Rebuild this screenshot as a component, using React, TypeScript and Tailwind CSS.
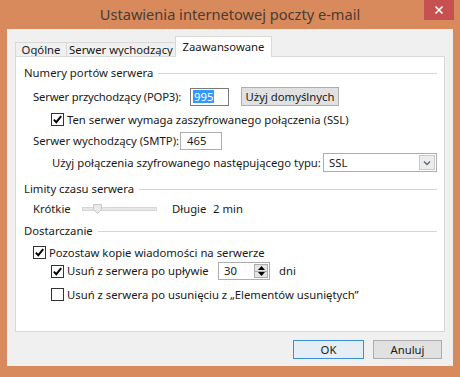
import React from "react";

function Check({ checked }: { checked?: boolean }) {
  return (
    <span className="flex h-[13px] w-[13px] shrink-0 items-center justify-center border border-[#333] bg-white">
      {checked && (
        <svg width="11" height="11" viewBox="0 0 11 11">
          <path d="M1.8 5.6 L4.3 8.2 L9.2 2.2" fill="none" stroke="#000" strokeWidth="1.9" />
        </svg>
      )}
    </span>
  );
}

function GroupTitle({ label, className }: { label: string; className: string }) {
  return (
    <div className={`flex h-4 items-center gap-[5px] pl-2 pr-[7px] ${className}`}>
      <span>{label}</span>
      <div className="h-px flex-1 bg-[#d5d5d5]" />
    </div>
  );
}

export default function App() {
  return (
    <div className="flex h-[377px] w-[460px] flex-col whitespace-nowrap bg-[#d88a5c] font-['Noto_Sans',sans-serif] text-[11.3px] leading-none text-[#1a1a1a]">
      {/* title bar */}
      <div className="flex h-[29px] shrink-0 items-start">
        <div className="w-[36px]" />
        <div className="flex h-[29px] flex-1 items-center justify-center text-[14.6px] text-[#4b3b33]">
          Ustawienia internetowej poczty e-mail
        </div>
        <div className="mr-[6px] flex h-[20px] w-[30px] items-center justify-center bg-[#c75050]">
          <svg width="10" height="10" viewBox="0 0 10 10">
            <path d="M1.5 1.5 L8.5 8.5 M8.5 1.5 L1.5 8.5" stroke="#fff" strokeWidth="1.6" />
          </svg>
        </div>
      </div>

      {/* client area */}
      <div className="mx-[7px] mb-[11px] flex flex-1 flex-col bg-[#f0f0f0]">
        <div className="-mb-px flex h-[28px] items-end pl-2 pt-[7px]">
          <div className="flex h-[15px] w-[52px] items-center justify-center border-l border-r border-t border-[#d9d9d9] bg-[#f0f0f0]">
            Ogólne
          </div>
          <div className="flex h-[15px] w-[109px] items-center justify-center border-r border-t border-[#d9d9d9] bg-[#f0f0f0]">
            Serwer wychodzący
          </div>
          <div className="relative z-10 -ml-px flex h-[21px] w-[97px] items-start justify-center border-l border-r border-t border-[#d9d9d9] bg-white pt-[4px]">
            Zaawansowane
          </div>
        </div>

        {/* panel */}
        <div className="mx-2 flex h-[276px] flex-col border border-[#d9d9d9] bg-white">
          <GroupTitle label="Numery portów serwera" className="mt-2" />

          <div className="mt-[6px] flex h-[19px] items-center pl-[17px]">
            <span className="w-[157px] tracking-[-0.2px]">Serwer przychodzący (POP3):</span>
            <div className="flex h-[18px] w-[39px] items-center border border-[#7a7a7a] bg-white pl-[2px]">
              <span className="bg-[#3399ff] px-px py-[1px] text-white">995</span>
            </div>
            <div className="ml-3 flex h-[19px] w-[98px] items-center justify-center border border-[#adadad] bg-[#e1e1e1]">
              Użyj domyślnych
            </div>
          </div>

          <div className="mt-[7px] flex h-[13px] items-center gap-[3px] pl-[35px]">
            <Check checked />
            <span>Ten serwer wymaga zaszyfrowanego połączenia (SSL)</span>
          </div>

          <div className="mt-[6px] flex h-[18px] items-center pl-[17px]">
            <span className="w-[147px]">Serwer wychodzący (SMTP):</span>
            <div className="flex h-[18px] w-[42px] items-center border border-[#adadad] bg-white pl-[6px]">465</div>
          </div>

          <div className="mt-[3px] flex h-[19px] items-center pl-[36px]">
            <span className="w-[271px]">Użyj połączenia szyfrowanego następującego typu:</span>
            <div className="flex h-[19px] w-[114px] items-center border border-[#adadad] bg-white">
              <span className="flex-1 pl-[5px]">SSL</span>
              <div className="m-px flex h-[15px] w-[16px] items-center justify-center border border-[#c9c9c9] bg-[#ececec]">
                <svg width="8" height="6" viewBox="0 0 8 6">
                  <path d="M1 1.5 L4 4.5 L7 1.5" fill="none" stroke="#5a6a7a" strokeWidth="1.4" />
                </svg>
              </div>
            </div>
          </div>

          <GroupTitle label="Limity czasu serwera" className="mt-[9px]" />

          <div className="mt-1 flex h-4 items-center pl-[17px]">
            <span className="w-[49px]">Krótkie</span>
            <div className="relative flex h-4 w-[75px] items-center">
              <div className="h-[4px] w-full border border-[#d6d6d6] bg-[#e7e7e7]" />
              <svg className="absolute left-[11px] top-[3px]" width="9" height="10" viewBox="0 0 9 10">
                <path d="M0.5 0.5 H8.5 V5.5 L4.5 9.5 L0.5 5.5 Z" fill="#e9e9e9" stroke="#c8c8c8" />
              </svg>
            </div>
            <span className="ml-[15px] w-[41px]">Długie</span>
            <span>2 min</span>
          </div>

          <GroupTitle label="Dostarczanie" className="mt-[6px]" />

          <div className="mt-[7px] flex h-[13px] items-center gap-[3px] pl-[17px]">
            <Check checked />
            <span>Pozostaw kopie wiadomości na serwerze</span>
          </div>

          <div className="mt-[3px] flex h-[18px] items-center pl-[35px]">
            <Check checked />
            <span className="ml-[3px] w-[151px]">Usuń z serwera po upływie</span>
            <div className="flex h-[18px] w-[52px] items-center border border-[#adadad] bg-white">
              <span className="flex-1 pl-[5px]">30</span>
              <div className="m-px flex h-[14px] w-[14px] flex-col border border-[#adadad] bg-[#e5e5e5]">
                <div className="flex flex-1 items-center justify-center border-b border-[#adadad]">
                  <svg width="7" height="4" viewBox="0 0 7 4"><path d="M0 4 L3.5 0 L7 4 Z" fill="#000" /></svg>
                </div>
                <div className="flex flex-1 items-center justify-center">
                  <svg width="7" height="4" viewBox="0 0 7 4"><path d="M0 0 L3.5 4 L7 0 Z" fill="#000" /></svg>
                </div>
              </div>
            </div>
            <span className="ml-[9px]">dni</span>
          </div>

          <div className="mt-2 flex h-[13px] items-center gap-[3px] pl-[35px]">
            <Check />
            <span>Usuń z serwera po usunięciu z „Elementów usuniętych”</span>
          </div>
        </div>

        {/* buttons */}
        <div className="mt-2 flex justify-end gap-[9px] pr-[11px]">
          <div className="flex h-[19px] w-[71px] items-center justify-center border border-[#3c8ed6] bg-[#e5edf5]">OK</div>
          <div className="flex h-[19px] w-[69px] items-center justify-center border border-[#adadad] bg-[#e1e1e1]">Anuluj</div>
        </div>
      </div>
    </div>
  );
}
